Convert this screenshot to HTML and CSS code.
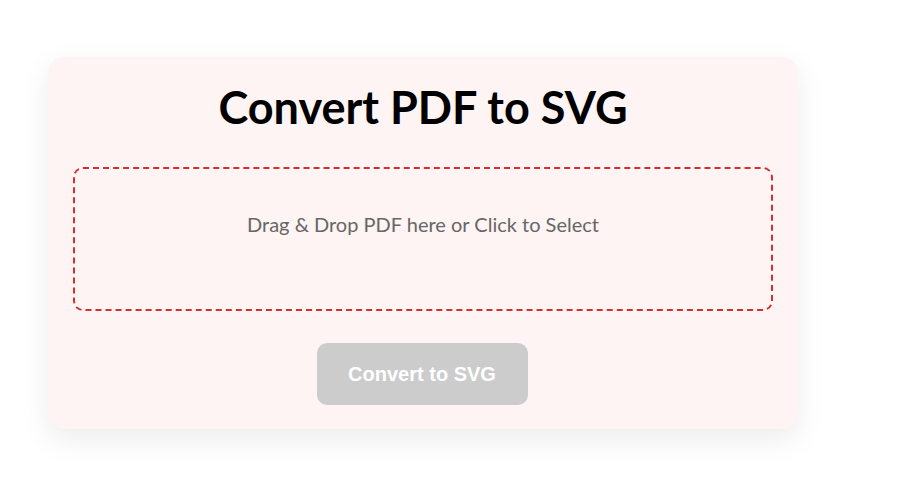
FILE: index.html
```html
<!DOCTYPE html>
<html lang="en">
  <head>
    <meta charset="UTF-8">
    <meta name="viewport" content="width=device-width, initial-scale=1.0">
    <title>Convert PDF to SVG</title>
    <link rel="stylesheet" href="styles.css">
  </head>
  <body>

    <div class="converter">
      <h1 class="converter-title">Convert PDF to SVG</h1>

      <label class="drop-zone" for="pdf-input">
        <span class="drop-label">Drag &amp; Drop PDF here or Click to Select</span>
        <input type="file" id="pdf-input" class="file-input" accept="application/pdf">
      </label>

      <div class="actions">
        <button class="convert-button" disabled>Convert to SVG</button>
      </div>
    </div>

  </body>
</html>
```

FILE: styles.css
```css
html, body {
  margin: 0;
  padding: 0;
  box-sizing: border-box;
}
*, *:before, *:after {
  box-sizing: inherit;
}
body {
  width: 100vw;
  height: 100vh;
  background-color: #fff;
  font-family: Lato, 'Noto Sans', sans-serif;
  overflow: hidden;
}
.converter {
  width: 750px;
  margin: 57px 0 0 48px;
  padding: 23px 25px 24px;
  background-color: #fff4f4;
  border-radius: 16px;
  box-shadow: 0 10px 30px rgba(0, 0, 0, 0.08);
}
.converter-title {
  margin: 0 0 33px;
  font-size: 45px;
  line-height: 1.2;
  font-weight: 700;
  text-align: center;
  color: #000;
}
.drop-zone {
  display: block;
  height: 144px;
  padding: 43px 20px 0;
  border: 2px dashed #d32f2f;
  border-radius: 10px;
  text-align: center;
  cursor: pointer;
}
.drop-label {
  font-size: 20px;
  line-height: 24px;
  color: #666;
}
.file-input {
  display: none;
}
.actions {
  display: flex;
  justify-content: center;
  margin-top: 32px;
}
.convert-button {
  width: 211px;
  height: 62px;
  margin-right: 2px;
  border: none;
  border-radius: 10px;
  background-color: #ccc;
  color: #fff;
  font-family: 'Liberation Sans', Arial, sans-serif;
  font-size: 20px;
  font-weight: 700;
}
```
